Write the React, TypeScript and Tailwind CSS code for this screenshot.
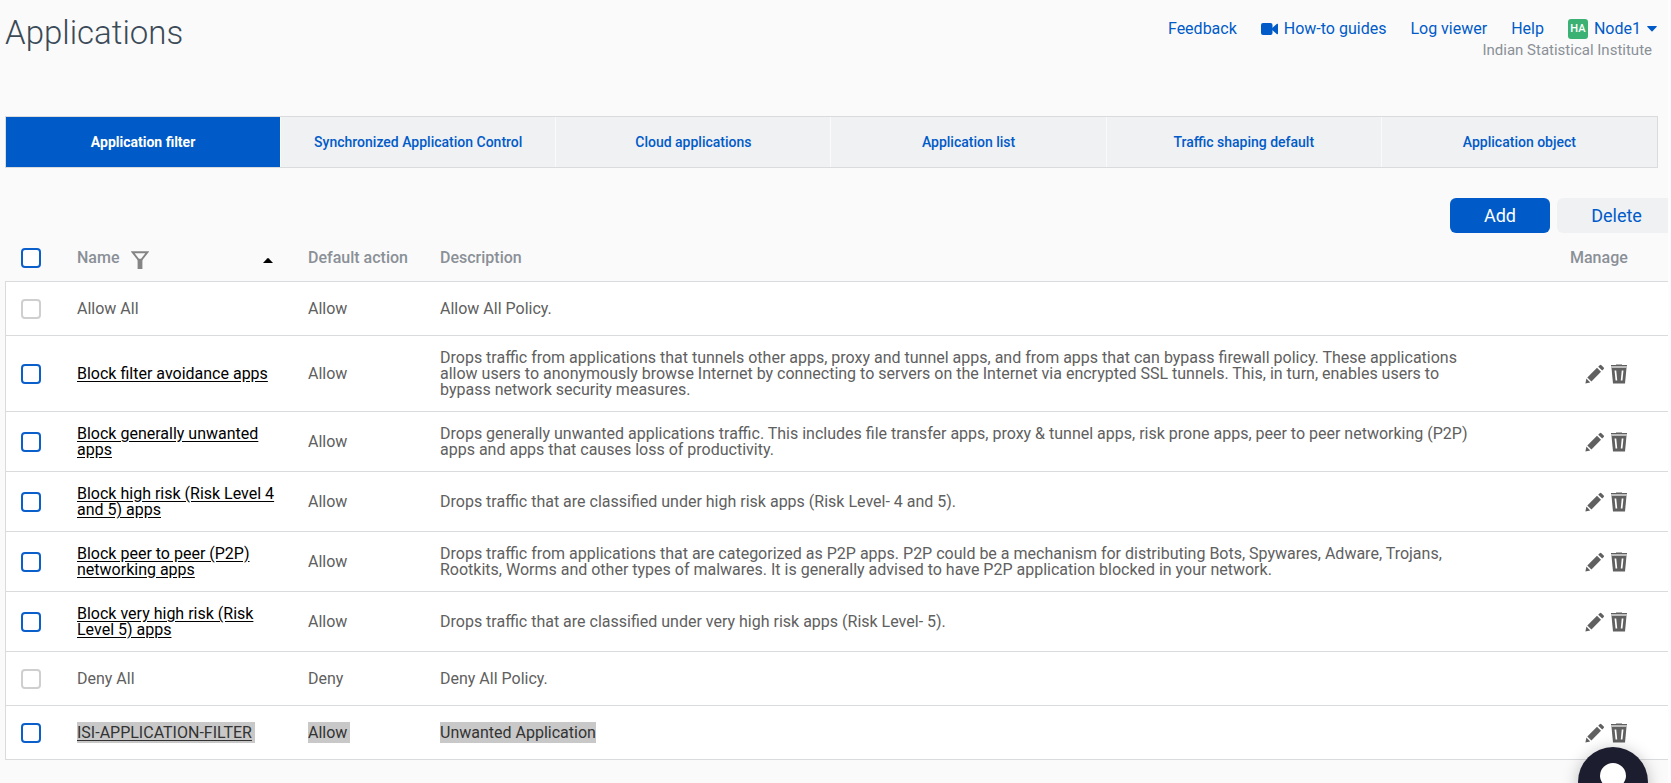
import React from "react";

type Rule = {
  name: string;
  action: string;
  description: string;
  builtin?: boolean;
  selected?: boolean;
};

const rules: Rule[] = [
  { name: "Allow All", action: "Allow", description: "Allow All Policy.", builtin: true },
  {
    name: "Block filter avoidance apps",
    action: "Allow",
    description:
      "Drops traffic from applications that tunnels other apps, proxy and tunnel apps, and from apps that can bypass firewall policy. These applications allow users to anonymously browse Internet by connecting to servers on the Internet via encrypted SSL tunnels. This, in turn, enables users to bypass network security measures.",
  },
  {
    name: "Block generally unwanted apps",
    action: "Allow",
    description:
      "Drops generally unwanted applications traffic. This includes file transfer apps, proxy & tunnel apps, risk prone apps, peer to peer networking (P2P) apps and apps that causes loss of productivity.",
  },
  {
    name: "Block high risk (Risk Level 4 and 5) apps",
    action: "Allow",
    description: "Drops traffic that are classified under high risk apps (Risk Level- 4 and 5).",
  },
  {
    name: "Block peer to peer (P2P) networking apps",
    action: "Allow",
    description:
      "Drops traffic from applications that are categorized as P2P apps. P2P could be a mechanism for distributing Bots, Spywares, Adware, Trojans, Rootkits, Worms and other types of malwares. It is generally advised to have P2P application blocked in your network.",
  },
  {
    name: "Block very high risk (Risk Level 5) apps",
    action: "Allow",
    description: "Drops traffic that are classified under very high risk apps (Risk Level- 5).",
  },
  { name: "Deny All", action: "Deny", description: "Deny All Policy.", builtin: true },
  { name: "ISI-APPLICATION-FILTER", action: "Allow", description: "Unwanted Application", selected: true },
];

const tabs = [
  "Application filter",
  "Synchronized Application Control",
  "Cloud applications",
  "Application list",
  "Traffic shaping default",
  "Application object",
];

function CheckBox({ label, disabled }: { label: string; disabled?: boolean }) {
  return (
    <input
      type="checkbox"
      aria-label={label}
      disabled={disabled}
      className="block size-5 appearance-none rounded-[4px] border-2 border-[#0b5fcb] bg-white checked:bg-[#005bc8] disabled:border-[#cfcfcf]"
    />
  );
}

function PencilIcon() {
  return (
    <svg viewBox="0 0 20 20" className="size-5" fill="#606060" aria-hidden="true">
      <path d="M0.4 19.4 L1.4 14.6 L5.2 18.4 Z" />
      <path d="M2.3 13.4 L12 3.8 L16 7.8 L6.4 17.5 Z" />
      <path d="M13.2 2.7 L14.7 1.2 Q15.5 0.4 16.4 1.2 L18.7 3.5 Q19.5 4.3 18.7 5.1 L17.2 6.6 Z" />
    </svg>
  );
}

function TrashIcon() {
  return (
    <svg viewBox="0 0 16 20" className="h-5 w-4" aria-hidden="true">
      <path d="M5 0.5 H11 V1 H16 V2 H0 V1 H5 Z" fill="#606060" />
      <path d="M0 2 H16 V4 H0 Z" fill="#bcbcbc" />
      <path d="M0.5 4 H15.5 L14 19.5 H2 Z" fill="#606060" />
      <path d="M4.4 6.5 L5.4 16.5 M11.6 6.5 L10.6 16.5" stroke="#fff" strokeWidth="1.7" fill="none" />
    </svg>
  );
}

const highlight = "bg-[#c8c8c8] py-px text-[#333]";

export default function App() {
  return (
    <div className="min-h-screen overflow-hidden border-r-[3px] border-[#fdfdfd] bg-[#fafafa] pl-[5px] font-['Roboto','Liberation_Sans',sans-serif] text-[16px] text-[#606060]">
      <header className="flex h-[116px] items-start justify-between">
        <h1 className="pt-3 text-[33px] leading-[42px] font-light text-[#3b4a57]">Applications</h1>
        <div className="flex flex-col items-end pt-[18px] pr-[11px]">
          <nav className="flex items-center gap-6 leading-[22px] text-[#005bc8]">
            <a href="#feedback">Feedback</a>
            <a href="#guides" className="flex items-center gap-[6px]">
              <svg viewBox="0 0 17 12" className="h-3 w-[17px]" fill="#005bc8" aria-hidden="true">
                <rect x="0" y="0" width="11.5" height="12" rx="2" />
                <path d="M10 6 L16 0.8 Q17 0.5 17 1.4 V10.6 Q17 11.5 16 11.2 Z" />
              </svg>
              How-to guides
            </a>
            <a href="#logs">Log viewer</a>
            <a href="#help">Help</a>
            <button type="button" className="flex items-center">
              <span className="mr-[6px] flex size-5 items-center justify-center rounded-[3px] bg-[#3bb273] text-[11px] font-medium text-white">
                HA
              </span>
              Node1
              <svg viewBox="0 0 10 6" className="ml-[6px] h-[6px] w-[10px]" fill="#005bc8" aria-hidden="true">
                <path d="M0.6 0 H9.4 Q10.2 0.3 9.5 1 L5.5 5.2 Q5 5.7 4.5 5.2 L0.5 1 Q-0.2 0.3 0.6 0 Z" />
              </svg>
            </button>
          </nav>
          <p className="pr-[5px] text-[15px] leading-5 text-[#8a9097]">Indian Statistical Institute</p>
        </div>
      </header>

      <div role="tablist" className="mr-[10px] grid h-[52px] grid-cols-6 border border-[#d9dbdd] bg-[#f0f1f3]">
        {tabs.map((t, i) => (
          <button
            key={t}
            type="button"
            role="tab"
            aria-selected={i === 0}
            className={
              i === 0
                ? "border-r border-[#fafafa] bg-[#005bc8] text-[14px] font-bold text-white"
                : "border-r border-[#fafafa] text-[14px] font-medium text-[#005bc8] last:border-r-0"
            }
          >
            {t}
          </button>
        ))}
      </div>

      <div className="-mr-2 mt-[30px] flex justify-end gap-[7px] text-[18px]">
        <button type="button" className="h-[35px] w-[100px] rounded-[6px] bg-[#005bc8] text-white">Add</button>
        <button type="button" className="h-[35px] w-[119px] rounded-[6px] bg-[#f0f1f3] text-[#005bc8]">Delete</button>
      </div>

      <table className="w-full table-fixed border-separate border-spacing-0 text-left leading-4">
        <colgroup>
          <col className="w-[72px]" />
          <col className="w-[231px]" />
          <col className="w-[132px]" />
          <col />
          <col className="w-[98px]" />
        </colgroup>
        <thead>
          <tr className="h-[49px] text-[#8a9097] [&>th]:border-b [&>th]:border-[#d9dbdd] [&>th]:pt-[2px] [&>th]:font-medium">
            <th className="pl-4"><CheckBox label="Select all" /></th>
            <th>
              <span className="flex items-center">
                Name
                <button type="button" aria-label="Filter by name" className="mt-1 ml-3">
                  <svg viewBox="0 0 18 18" className="size-[18px]" fill="none" aria-hidden="true">
                    <path d="M1.6 1.2 H16.4 L10.6 8.6 H7.4 Z" stroke="#858585" strokeWidth="1.9" />
                    <path d="M6.6 8 H11.4 V18 H6.6 Z" fill="#858585" />
                  </svg>
                </button>
                <button type="button" aria-label="Sort by name" className="mt-1 mr-[35px] ml-auto">
                  <svg viewBox="0 0 10 5" className="h-[5px] w-[10px]" fill="#000" aria-hidden="true">
                    <path d="M0 5 L4.2 0.4 Q5 -0.2 5.8 0.4 L10 5 Z" />
                  </svg>
                </button>
              </span>
            </th>
            <th>Default action</th>
            <th>Description</th>
            <th>Manage</th>
          </tr>
        </thead>
        <tbody className="bg-white">
          {rules.map((r) => (
            <tr key={r.name} className="h-[54px] [&>td]:border-b [&>td]:border-[#d9dbdd] [&>td]:pt-[14px] [&>td]:pb-[13px]">
              <td className="border-l pl-[15px]">
                <CheckBox label={"Select " + r.name} disabled={r.builtin} />
              </td>
              <td className="pr-[22px]">
                {r.builtin ? (
                  r.name
                ) : (
                  <a
                    href="#rule"
                    className={
                      r.selected
                        ? "bg-[#c8c8c8] py-px pr-[3px] text-[#333] underline underline-offset-2"
                        : "text-black underline underline-offset-2"
                    }
                  >
                    {r.name}
                  </a>
                )}
              </td>
              <td>
                <span className={r.selected ? "bg-[#c8c8c8] py-px pr-[3px] text-[#333]" : undefined}>{r.action}</span>
              </td>
              <td className="pr-[92px]">
                <span className={r.selected ? highlight : undefined}>{r.description}</span>
              </td>
              <td>
                {!r.builtin && (
                  <span className="flex gap-[6px] pl-[15px]">
                    <button type="button" aria-label={"Edit " + r.name}><PencilIcon /></button>
                    <button type="button" aria-label={"Delete " + r.name}><TrashIcon /></button>
                  </span>
                )}
              </td>
            </tr>
          ))}
        </tbody>
      </table>

      <button
        type="button"
        aria-label="Open assistant"
        className="fixed right-[23px] -bottom-[34px] flex size-[70px] justify-center rounded-full bg-[#1d1d30] pt-4 shadow-[0_2px_16px_rgba(0,0,0,0.25)]"
      >
        <svg viewBox="0 0 26 34" className="h-[34px] w-[26px]" fill="#fff" aria-hidden="true">
          <path d="M13 0 A13 13 0 0 1 26 13 C26 18 22 21 21 26 H5 C4 21 0 18 0 13 A13 13 0 0 1 13 0 Z" />
        </svg>
      </button>
    </div>
  );
}
